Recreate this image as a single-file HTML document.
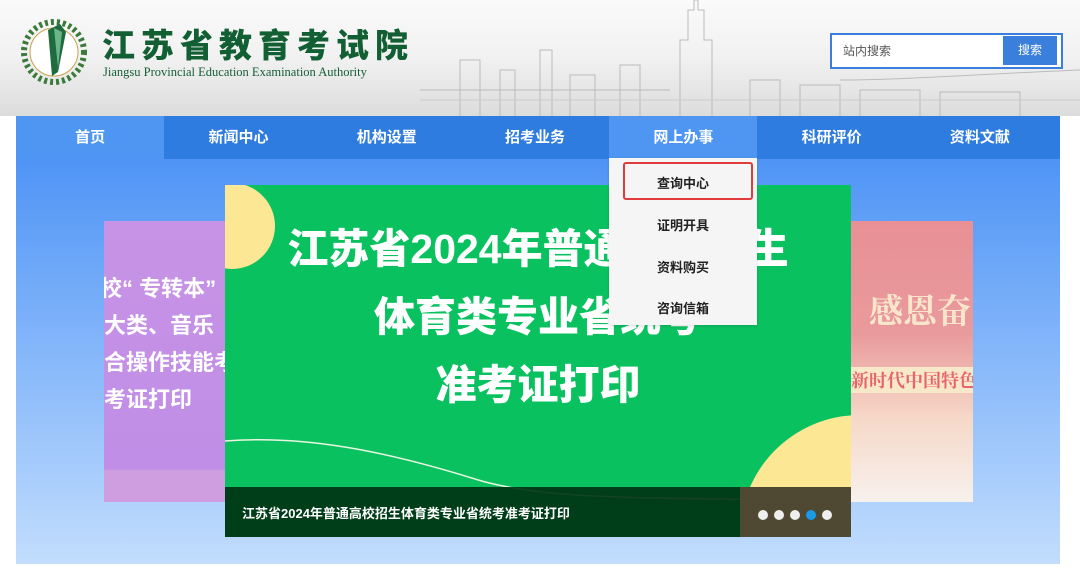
<!DOCTYPE html>
<html><head><meta charset="utf-8"><style>
*{margin:0;padding:0;box-sizing:border-box}
html{overflow:hidden;width:1080px;height:568px}
body{width:1080px;height:568px;position:relative;overflow:hidden;background:#fff;font-family:"Liberation Sans","Noto Sans CJK SC",sans-serif}
.abs{position:absolute}
#hdr{left:0;top:0;width:1080px;height:116px;background:linear-gradient(180deg,#fafafa 0%,#f1f1f1 50%,#dcdcdc 100%)}
#nav{left:16px;top:116px;width:1044px;height:43px;background:#2f7ce0;display:flex}
#nav div{width:148.3px;text-align:center;color:#fff;font-weight:bold;font-size:15px;line-height:43px}
#nav .on{background:#4e96f1}
#body{left:16px;top:159px;width:1044px;height:405px;background:linear-gradient(180deg,#4f94f5 0%,#8dbcfb 55%,#c2ddfc 100%)}
.card{font-weight:bold;font-size:22px;line-height:37px;overflow:hidden;white-space:nowrap}
#drop{left:609px;top:158px;width:148px;height:167px;background:#f5f5f5;box-shadow:0 1px 3px rgba(0,0,0,.15)}
#drop div{position:absolute;left:0;width:148px;text-align:center;font-size:13px;font-weight:bold;color:#222}
</style></head><body>
<div id="hdr" class="abs">
<svg class="abs" style="left:420px;top:0" width="660" height="116"><g stroke="#bbb" fill="none" stroke-width="1">
<path d="M260 116V40h8V10h6V0h4v10h6v30h8v76"/><path d="M40 116V60h20v56M80 116V70h15v46M120 116V50h12v66M150 116V75h25v41M200 116V65h20v51M330 116V80h30v36M380 116V85h40v31M440 116V90h60v26M520 116V92h80v24"/><path d="M0 100h660" stroke="#ccc"/><path d="M0 90h250M420 80c60 0 120-5 240-10"/></g></svg>
</div>
<svg class="abs" style="left:18px;top:14px" width="72" height="76"><circle cx="36" cy="38" r="30" fill="none" stroke="#3a7a3a" stroke-width="6" stroke-dasharray="3 3"/><circle cx="36" cy="38" r="24" fill="#fff" stroke="#c9a24a" stroke-width="1"/><path d="M30 16l12-6 6 8-8 40-6 4z" fill="#1e6b3e"/><path d="M36 14l8 4-4 36" fill="#6bb58a"/></svg>
<div class="abs" style="left:102px;top:26px;font-size:33px;font-weight:900;color:#135f34;letter-spacing:6px;line-height:40px">江苏省教育考试院</div>
<div class="abs" style="left:103px;top:65px;font-size:12.5px;color:#135f34;font-family:'Liberation Serif',serif;white-space:nowrap">Jiangsu Provincial Education Examination Authority</div>
<div class="abs" style="left:830px;top:33px;width:233px;height:36px;border:2px solid #3a7fdc;background:#fff"></div>
<div class="abs" style="left:843px;top:42px;font-size:12px;color:#555">站内搜索</div>
<div class="abs" style="left:1003px;top:36px;width:54px;height:29px;background:#3a7fdc;color:#fff;font-size:12px;text-align:center;line-height:29px">搜索</div>
<div id="nav" class="abs"><div class="on">首页</div><div>新闻中心</div><div>机构设置</div><div>招考业务</div><div class="on">网上办事</div><div>科研评价</div><div>资料文献</div></div>
<div id="body" class="abs"></div>
<div class="abs card" style="left:104px;top:221px;width:122px;height:281px;background:linear-gradient(180deg,#c793e6,#c08ee6 88%,#cf9ee0 89%);color:#fff;padding-top:49px;text-indent:-4px">校“ 专转本”<br>大类、音乐<br>合操作技能考<br>考证打印</div>
<div class="abs card" style="left:851px;top:221px;width:122px;height:281px;background:linear-gradient(180deg,#e89096,#e99a9c 40%,#f6d8c8 70%,#f7f1ec);color:#f8e6cc;font-family:'Noto Serif CJK SC',serif;font-size:34px;line-height:44px;padding:66px 0 0 18px">感恩奋<div style="font-size:18px;color:#e8646c;line-height:26px;margin-left:-18px;background:#f7e8c9;margin-top:36px">新时代中国特色</div></div>
<div class="abs" style="left:225px;top:185px;width:626px;height:352px;background:#0ac160;overflow:hidden">
<div class="abs" style="width:86px;height:86px;border-radius:50%;background:#fce795;top:-2px;left:-36px"></div>
<div class="abs" style="left:515px;top:230px;width:240px;height:240px;border-radius:50%;background:#fce795"></div>
<svg class="abs" style="left:0;top:0" width="626" height="352"><path d="M0 256C80 250 160 266 250 294C320 316 420 312 626 316" stroke="#e9f6e0" stroke-width="1.5" fill="none"/></svg>
<div class="abs" style="left:0;top:30px;width:626px;text-align:center;color:#fff;font-weight:900;font-size:41px;line-height:68px">江苏省2024年普通高校招生<br>体育类专业省统考<br>准考证打印</div>
<div class="abs" style="left:0;top:302px;width:626px;height:50px;background:rgba(0,50,20,.92)"></div>
<div class="abs" style="left:515px;top:302px;width:111px;height:50px;background:#4f4832"></div>
<div class="abs" style="left:17px;top:318px;color:#fff;font-size:13px;font-weight:bold">江苏省2024年普通高校招生体育类专业省统考准考证打印</div>
<div class="abs" style="left:533px;top:325px;display:flex;gap:6px"><i style="width:10px;height:10px;border-radius:50%;background:#eee"></i><i style="width:10px;height:10px;border-radius:50%;background:#eee"></i><i style="width:10px;height:10px;border-radius:50%;background:#eee"></i><i style="width:10px;height:10px;border-radius:50%;background:#1a9be8"></i><i style="width:10px;height:10px;border-radius:50%;background:#eee"></i></div>
</div>
<div id="drop" class="abs">
<div style="top:4px;left:14px;width:130px;height:38px;border:2px solid #e03a3a;border-radius:3px"></div>
<div style="top:15px;width:148px">查询中心</div>
<div style="top:57px">证明开具</div>
<div style="top:99px">资料购买</div>
<div style="top:140px">咨询信箱</div>
</div>
</body></html>
